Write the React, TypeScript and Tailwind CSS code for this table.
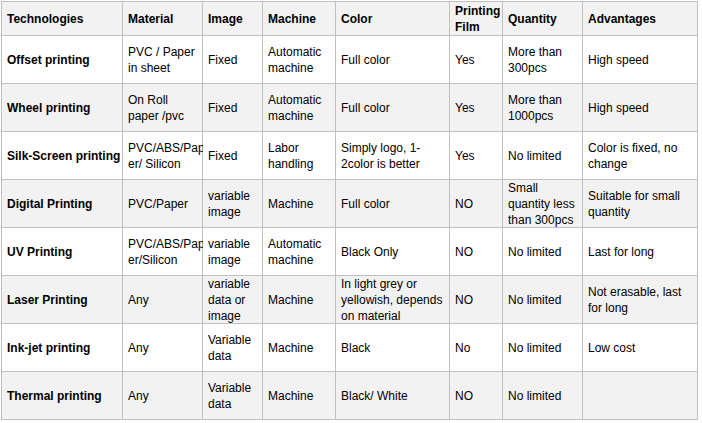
const headers = ['Technologies', 'Material', 'Image', 'Machine', 'Color', 'Printing\nFilm', 'Quantity', 'Advantages'];

// each cell: lines split by \n, matching the wraps in the original table
const rows: string[][] = [
  ['Offset printing', 'PVC / Paper\nin sheet', 'Fixed', 'Automatic\nmachine', 'Full color', 'Yes', 'More than\n300pcs', 'High speed'],
  ['Wheel printing', 'On Roll\npaper /pvc', 'Fixed', 'Automatic\nmachine', 'Full color', 'Yes', 'More than\n1000pcs', 'High speed'],
  ['Silk-Screen printing', 'PVC/ABS/Pap\ner/ Silicon', 'Fixed', 'Labor\nhandling', 'Simply logo, 1-\n2color is better', 'Yes', 'No limited', 'Color is fixed, no\nchange'],
  ['Digital Printing', 'PVC/Paper', 'variable\nimage', 'Machine', 'Full color', 'NO', 'Small\nquantity less\nthan 300pcs', 'Suitable for small\nquantity'],
  ['UV Printing', 'PVC/ABS/Pap\ner/Silicon', 'variable\nimage', 'Automatic\nmachine', 'Black Only', 'NO', 'No limited', 'Last for long'],
  ['Laser Printing', 'Any', 'variable\ndata or\nimage', 'Machine', 'In light grey or\nyellowish, depends\non material', 'NO', 'No limited', 'Not erasable, last\nfor long'],
  ['Ink-jet printing', 'Any', 'Variable\ndata', 'Machine', 'Black', 'No', 'No limited', 'Low cost'],
  ['Thermal printing', 'Any', 'Variable\ndata', 'Machine', 'Black/ White', 'NO', 'No limited', ''],
];

const Cell = ({ text, bold, gray, tall }: { text: string; bold?: boolean; gray?: boolean; tall?: boolean }) => (
  <div
    className={`flex items-center pl-[5px] pr-1 ${tall ? 'h-[47px]' : 'h-[33px]'} ${gray ? 'bg-[#f2f2f2]' : 'bg-white'} ${bold ? 'font-bold' : ''}`}
  >
    <div className="whitespace-pre leading-4">{text}</div>
  </div>
);

export default function App() {
  return (
    <div className="w-[702px] h-[423px] bg-white pl-px pt-px text-[12px] text-black font-['Liberation_Sans',Arial,sans-serif]">
      <div className="grid w-[697px] grid-cols-[120px_79px_59px_72px_113px_52px_79px_114px] gap-px bg-[#c0c0c0] p-px">
        {headers.map((h, i) => (
          <Cell key={'h' + i} text={h} bold gray />
        ))}
        {rows.map((row, r) =>
          row.map((c, i) => <Cell key={r + '-' + i} text={c} bold={i === 0} gray={r % 2 === 1} tall />)
        )}
      </div>
    </div>
  );
}
